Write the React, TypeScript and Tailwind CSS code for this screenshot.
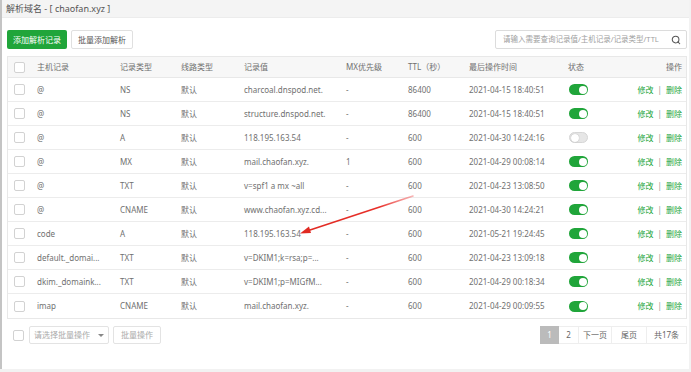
import { Search } from "lucide-react";

type Row = {
  host: string;
  type: string;
  value: string;
  mx: string;
  ttl: string;
  time: string;
  on: boolean;
};

const ROWS: Row[] = [
  { host: "@", type: "NS", value: "charcoal.dnspod.net.", mx: "-", ttl: "86400", time: "2021-04-15 18:40:51", on: true },
  { host: "@", type: "NS", value: "structure.dnspod.net.", mx: "-", ttl: "86400", time: "2021-04-15 18:40:51", on: true },
  { host: "@", type: "A", value: "118.195.163.54", mx: "-", ttl: "600", time: "2021-04-30 14:24:16", on: false },
  { host: "@", type: "MX", value: "mail.chaofan.xyz.", mx: "1", ttl: "600", time: "2021-04-29 00:08:14", on: true },
  { host: "@", type: "TXT", value: "v=spf1 a mx ~all", mx: "-", ttl: "600", time: "2021-04-23 13:08:50", on: true },
  { host: "@", type: "CNAME", value: "www.chaofan.xyz.cd...", mx: "-", ttl: "600", time: "2021-04-30 14:24:21", on: true },
  { host: "code", type: "A", value: "118.195.163.54", mx: "-", ttl: "600", time: "2021-05-21 19:24:45", on: true },
  { host: "default._domai...", type: "TXT", value: "v=DKIM1;k=rsa;p=...", mx: "-", ttl: "600", time: "2021-04-23 13:09:18", on: true },
  { host: "dkim._domaink...", type: "TXT", value: "v=DKIM1;p=MIGfM...", mx: "-", ttl: "600", time: "2021-04-29 00:18:34", on: true },
  { host: "imap", type: "CNAME", value: "mail.chaofan.xyz.", mx: "-", ttl: "600", time: "2021-04-29 00:09:55", on: true },
];

const COLS = "grid grid-cols-[23px_83px_61px_63px_102px_62px_61px_99px_59px_67px]";

function Checkbox() {
  return <span className="block h-[11px] w-[11px] rounded-[2px] border border-[#d2d2d2] bg-white" />;
}

function Toggle({ on }: { on: boolean }) {
  return on ? (
    <span className="flex h-[11px] w-[19px] items-center justify-end rounded-full bg-[#20a53a] pr-[1.5px]">
      <span className="h-[8px] w-[8px] rounded-full bg-white" />
    </span>
  ) : (
    <span className="flex h-[11px] w-[19px] items-center rounded-full border border-[#d6d6d6] bg-[#e6e6e6] pl-[1px]">
      <span className="h-[8px] w-[8px] rounded-full bg-white shadow-[0_0_1px_#999]" />
    </span>
  );
}

export default function App() {
  return (
    <div
      className="relative h-[372px] w-[691px] overflow-hidden bg-[#f2f2f2] text-[8px] text-[#707070]"
      style={{ fontFamily: '"Noto Sans", "Noto Sans CJK SC", sans-serif' }}
    >
      <div className="flex h-[369px] w-[689px] flex-col border-l-[2px] border-[#c4c4c4] bg-white">
        <div className="flex h-[18px] items-center border-b border-[#ececec] bg-[#f4f4f4] pl-[4px] text-[9px] text-[#555]">
          解析域名 - [ chaofan.xyz ]
        </div>

        <div className="flex flex-1 flex-col pl-[5px] pr-[2px]">
          <div className="mt-[12px] flex h-[19px] items-stretch">
            <button className="rounded-[2px] bg-[#20a53a] px-[6px] text-[8px] text-white">添加解析记录</button>
            <button className="ml-[4px] rounded-[2px] border border-[#e0e0e0] bg-white px-[6px] text-[8px] text-[#555]">
              批量添加解析
            </button>
            <div className="ml-auto flex w-[192px] items-center rounded-[2px] border border-[#dcdcdc] bg-white pl-[7px] pr-[5px]">
              <span className="flex-1 text-[7.5px] text-[#a0a0a0]">请输入需要查询记录值/主机记录/记录类型/TTL</span>
              <Search size={10} strokeWidth={2.5} className="text-[#555]" />
            </div>
          </div>

          <div className="mt-[7px] border border-[#e8e8e8]">
            <div className={`${COLS} h-[21px] items-center border-b border-[#e8e8e8] bg-[#f7f7f7]`}>
              <div className="pl-[6px]"><Checkbox /></div>
              <div className="pl-[6px]">主机记录</div>
              <div className="pl-[6px]">记录类型</div>
              <div className="pl-[6px]">线路类型</div>
              <div className="pl-[6px]">记录值</div>
              <div className="pl-[6px]">MX优先级</div>
              <div className="pl-[6px]">TTL（秒）</div>
              <div className="pl-[6px]">最后操作时间</div>
              <div className="pl-[6px]">状态</div>
              <div className="pr-[6px] text-right">操作</div>
            </div>
            {ROWS.map((r, i) => (
              <div
                key={i}
                className={`${COLS} h-[24px] items-center ${i < ROWS.length - 1 ? "border-b border-[#ececec]" : ""}`}
              >
                <div className="pl-[6px]"><Checkbox /></div>
                <div className="pl-[6px]">{r.host}</div>
                <div className="pl-[6px]">{r.type}</div>
                <div className="pl-[6px]">默认</div>
                <div className="pl-[6px]">{r.value}</div>
                <div className="pl-[6px]">{r.mx}</div>
                <div className="pl-[6px]">{r.ttl}</div>
                <div className="pl-[6px]">{r.time}</div>
                <div className="pl-[7px]"><Toggle on={r.on} /></div>
                <div className="pr-[6px] text-right">
                  <span className="text-[#20a53a]">修改</span>
                  <span className="mx-[4px] text-[#999]">|</span>
                  <span className="text-[#20a53a]">删除</span>
                </div>
              </div>
            ))}
          </div>

          <div className="mt-[7px] flex h-[18px] items-stretch">
            <div className="flex items-center pl-[6px]"><Checkbox /></div>
            <div className="ml-[5px] flex w-[80px] items-center justify-between rounded-[2px] border border-[#e3e3e3] px-[4px] text-[#aaa]">
              <span>请选择批量操作</span>
              <span className="h-0 w-0 border-x-[3px] border-t-[3px] border-x-transparent border-t-[#888]" />
            </div>
            <button className="ml-[4px] rounded-[2px] border border-[#e3e3e3] px-[7px] text-[8px] text-[#aaa]">批量操作</button>

            <div className="ml-auto flex items-stretch">
              <span className="flex w-[19px] items-center justify-center bg-[#bbbbbb] text-white">1</span>
              <span className="flex w-[19px] items-center justify-center border-y border-[#eee] text-[#666]">2</span>
              <span className="flex w-[34px] items-center justify-center border border-[#eee] text-[#666]">下一页</span>
              <span className="flex w-[34px] items-center justify-center border-y border-[#eee] text-[#666]">尾页</span>
              <span className="flex w-[41px] items-center justify-center border border-[#eee] text-[#666]">共17条</span>
            </div>
          </div>
        </div>
      </div>

      <svg className="pointer-events-none absolute left-0 top-0" width="691" height="372">
        <defs>
          <linearGradient id="ar" x1="413" y1="196" x2="301" y2="233" gradientUnits="userSpaceOnUse">
            <stop offset="0" stopColor="#f26a6a" stopOpacity="0.5" />
            <stop offset="0.3" stopColor="#e8302a" />
            <stop offset="1" stopColor="#e02a22" />
          </linearGradient>
        </defs>
        <line x1="413" y1="196" x2="307" y2="231" stroke="url(#ar)" strokeWidth="1.6" strokeLinecap="round" />
        <polygon points="300,233.5 309,226.5 311,233" fill="#e02a22" />
      </svg>
    </div>
  );
}
